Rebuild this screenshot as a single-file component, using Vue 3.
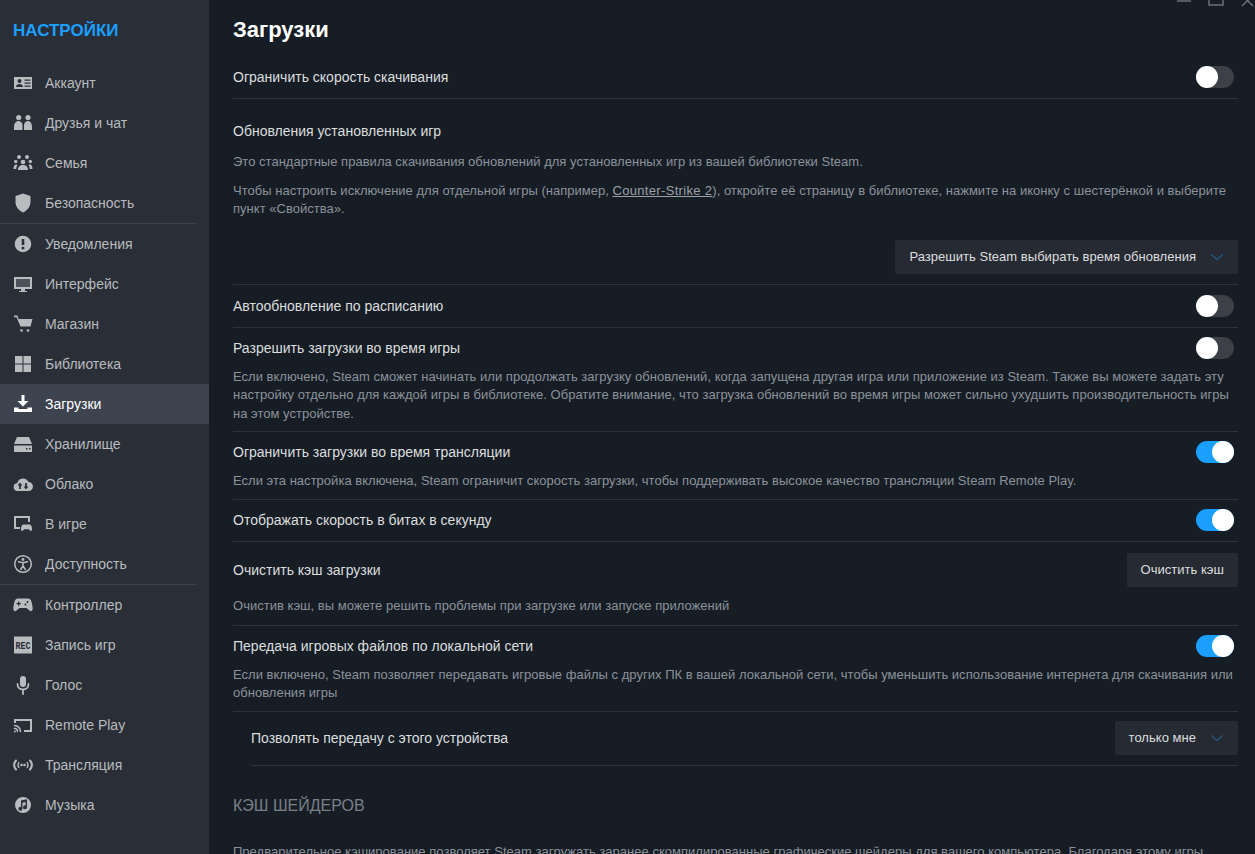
<template>
  <div class="page">
    <aside class="sidebar">
      <div class="brand">НАСТРОЙКИ</div>
      <nav v-for="(group, i) in menu" :key="i" class="menu-group">
        <div
          v-for="item in group"
          :key="item.label"
          class="menu-item"
          :class="{ active: item.label === 'Загрузки' }"
        >
          <svg class="menu-icon" viewBox="0 0 20 20" v-html="item.icon"></svg>
          <span>{{ item.label }}</span>
        </div>
      </nav>
    </aside>

    <main class="content">
      <h1 class="title">Загрузки</h1>

      <div class="row">
        <span class="label">Ограничить скорость скачивания</span>
        <span class="toggle"></span>
      </div>

      <section class="updates">
        <div class="label heading">Обновления установленных игр</div>
        <p class="desc first">Это стандартные правила скачивания обновлений для установленных игр из вашей библиотеки Steam.</p>
        <p class="desc second">
          Чтобы настроить исключение для отдельной игры (например, <a class="link">Counter-Strike 2</a>), откройте её страницу в библиотеке, нажмите на иконку с шестерёнкой и выберите пункт «Свойства».
        </p>
        <div class="right">
          <div class="select">
            Разрешить Steam выбирать время обновления
            <svg class="chevron" viewBox="0 0 12 12"><path d="M.5 3.500L6 8.500l5.500-5" /></svg>
          </div>
        </div>
      </section>

      <div class="row">
        <span class="label">Автообновление по расписанию</span>
        <span class="toggle"></span>
      </div>

      <div class="block">
        <div class="head">
          <span class="label">Разрешить загрузки во время игры</span>
          <span class="toggle"></span>
        </div>
        <p class="desc">Если включено, Steam сможет начинать или продолжать загрузку обновлений, когда запущена другая игра или приложение из Steam. Также вы можете задать эту настройку отдельно для каждой игры в библиотеке. Обратите внимание, что загрузка обновлений во время игры может сильно ухудшить производительность игры на этом устройстве.</p>
      </div>

      <div class="block">
        <div class="head">
          <span class="label">Ограничить загрузки во время трансляции</span>
          <span class="toggle on"></span>
        </div>
        <p class="desc">Если эта настройка включена, Steam ограничит скорость загрузки, чтобы поддерживать высокое качество трансляции Steam Remote Play.</p>
      </div>

      <div class="row short">
        <span class="label">Отображать скорость в битах в секунду</span>
        <span class="toggle on"></span>
      </div>

      <div class="block cache">
        <div class="head">
          <span class="label">Очистить кэш загрузки</span>
          <div class="select">Очистить кэш</div>
        </div>
        <p class="desc">Очистив кэш, вы можете решить проблемы при загрузке или запуске приложений</p>
      </div>

      <div class="block">
        <div class="head">
          <span class="label">Передача игровых файлов по локальной сети</span>
          <span class="toggle on"></span>
        </div>
        <p class="desc">Если включено, Steam позволяет передавать игровые файлы с других ПК в вашей локальной сети, чтобы уменьшить использование интернета для скачивания или обновления игры</p>
      </div>

      <div class="row nested">
        <span class="label">Позволять передачу с этого устройства</span>
        <div class="select">
          только мне
          <svg class="chevron" viewBox="0 0 12 12"><path d="M.5 3.500L6 8.500l5.500-5" /></svg>
        </div>
      </div>

      <h2 class="section-title">КЭШ ШЕЙДЕРОВ</h2>
      <p class="desc">Предварительное кэширование позволяет Steam загружать заранее скомпилированные графические шейдеры для вашего компьютера. Благодаря этому игры</p>
    </main>

    <!-- кнопки окна обрезаны верхним краем -->
    <svg class="window-controls" width="78" height="8" viewBox="0 0 78 8">
      <path d="M0 1h14" />
      <path d="M32 -4h14v9H32z" />
      <path d="M65 -5l5.500 5.500L76 -5M65 6l5.500 -5.500L76 6" />
    </svg>
  </div>
</template>

<script setup>
const fill = (d) => `<path fill="currentColor" fill-rule="evenodd" d="${d}"/>`
const stroke = (d, w = 1.8) =>
  `<path fill="none" stroke="currentColor" stroke-width="${w}" stroke-linecap="round" d="${d}"/>`
const dot = (x, y, r) => `<circle fill="currentColor" cx="${x}" cy="${y}" r="${r}"/>`

const menu = [
  [
    {
      label: 'Аккаунт',
      icon: fill(
        'M1 4h18v12H1z M6.500 6a2 2 0 1 0 0 4 2 2 0 0 0 0-4z M3 14c0-2 1.500-3 3.500-3s3.500 1 3.500 3z M11.500 6.500h6v1.200h-6z M11.500 9.500h6v1.200h-6z M11.500 12.500h6v1.200h-6z'
      ),
    },
    {
      label: 'Друзья и чат',
      icon:
        dot(5.700, 4.500, 2.600) +
        dot(15, 4.500, 2.600) +
        fill('M1 17v-3c0-3.500 2-6 4.500-6 1.300 0 2.500.7 3.200 1.800L9.500 11.500V17z M11 17v-5.500l.8-1.700C12.500 8.700 13.700 8 15 8c2.500 0 4 2.500 4 6v3z'),
    },
    {
      label: 'Семья',
      icon:
        dot(6, 4, 2) +
        dot(14, 4, 2) +
        dot(2.700, 8.500, 1.700) +
        dot(17.300, 8.500, 1.700) +
        dot(10, 9, 2.300) +
        fill('M5 17c0-3.500 2-5 5-5s5 1.500 5 5z M.5 16c0-3 1-4.500 2.500-4.500.6 0 1 .1 1.400.4C3.600 13 3.300 14.500 3.300 16z M19.500 16c0-3-1-4.500-2.500-4.500-.6 0-1 .1-1.400.4.800 1.100 1.100 2.600 1.100 4.100z'),
    },
    {
      label: 'Безопасность',
      icon: fill('M10 .5L17.500 3v6c0 5-3.500 8.500-7.500 10.500C6 17.500 2.500 14 2.500 9V3z'),
    },
  ],
  [
    {
      label: 'Уведомления',
      icon: fill(
        'M10 1.700a8.300 8.300 0 1 0 0 16.600 8.300 8.300 0 0 0 0-16.600z M8.700 5h2.600v6H8.700z M10 12.500a1.500 1.500 0 1 0 0 3 1.500 1.500 0 0 0 0-3z'
      ),
    },
    {
      label: 'Интерфейс',
      icon:
        fill('M1 3h18v12h-7v2h2v1H6v-1h2v-2H1z M3 5v8h14V5z') +
        '<rect x="3" y="5" width="14" height="8" fill="currentColor" opacity=".25"/>',
    },
    {
      label: 'Магазин',
      icon:
        fill('M1 1.500h3.500l1 3.500H19.500l-2 7.500H7.500L3.500 3.300H1z') + dot(8.500, 16.500, 1.300) + dot(15, 16.500, 1.300),
    },
    {
      label: 'Библиотека',
      icon: fill('M2 2h7.500v7.500H2z M10.500 2H18v7.500h-7.500z M2 10.500h7.500V18H2z M10.500 10.500H18V18h-7.500z'),
    },
    {
      label: 'Загрузки',
      icon: fill('M8.500 1h3v6h4L10 12.500 4.500 7h4z M1 13.500h4.500v1.500h9v-1.500H19V18H1z'),
    },
    {
      label: 'Хранилище',
      icon: fill('M4 3h12l3 7H1z M1 11.500h18V18H1z M13 14v1.500h1.500V14z M16 14v1.500h1.500V14z'),
    },
    {
      label: 'Облако',
      icon: fill(
        'M5 17a4 4 0 0 1-.6-8 5.800 5.800 0 0 1 11-1 4.500 4.500 0 0 1 .1 9z M7 8.500l-2.500 3h1.600V15h1.800v-3.500h1.600z M12.100 9v3.500h-1.600l2.500 3 2.500-3h-1.600V9z'
      ),
    },
    {
      label: 'В игре',
      icon: fill(
        'M1 2h16v6h-2V4H3v9h4v2H1z M10.500 10.500h6c1.500 0 2.500 2 2.500 4.500 0 2-1.200 2.500-2.300 1.200l-.9-1h-4.600l-.9 1C9.200 17.500 8 17 8 15c0-2.500 1-4.500 2.500-4.500z'
      ),
    },
    {
      label: 'Доступность',
      icon:
        '<circle cx="10" cy="10" r="8.300" fill="none" stroke="currentColor" stroke-width="1.500"/>' +
        dot(10, 5.500, 1.400) +
        stroke('M5.500 7.800l4.500 1 4.500-1M10 8.800v3M10 11.800l-2.300 3.700M10 11.800l2.300 3.700', 1.500),
    },
  ],
  [
    {
      label: 'Контроллер',
      icon: fill(
        'M5 3.500h10c2 0 3 1 3.700 4 .7 3 1.300 6 .8 7.500-.5 1.500-2.200 1.500-3.300.2L13.500 13h-7l-2.700 2.200c-1.100 1.300-2.800 1.300-3.300-.2-.5-1.500.1-4.500.8-7.500.7-3 1.700-4 3.700-4z M5 6.500v1.500H3.500v1.300H5v1.500h1.300V9.300h1.500V8H6.300V6.500z M14.500 6a1 1 0 1 0 0 2 1 1 0 0 0 0-2z M12.500 8.500a1 1 0 1 0 0 2 1 1 0 0 0 0-2z'
      ),
    },
    {
      label: 'Запись игр',
      icon:
        '<rect x="1" y="1.500" width="18" height="17" fill="currentColor"/>' +
        '<text x="10" y="13.500" text-anchor="middle" textLength="15" lengthAdjust="spacingAndGlyphs" font-family="Liberation Mono, monospace" font-weight="700" font-size="10" fill="#2a2e37">REC</text>',
    },
    {
      label: 'Голос',
      icon:
        '<rect x="7" y="1" width="6" height="11" rx="3" fill="currentColor"/>' +
        stroke('M4.500 9c0 3.500 2.500 5.500 5.500 5.500s5.500-2 5.500-5.500M10 14.500V19'),
    },
    {
      label: 'Remote Play',
      icon:
        fill('M1 4h18v13h-8v-2h6V6H3v2H1z') +
        stroke('M1.500 10.500a6 6 0 0 1 6 6M1.500 13.500a3 3 0 0 1 3 3', 1.500) +
        dot(1.800, 16.500, 1),
    },
    {
      label: 'Трансляция',
      icon:
        stroke('M3 5.500c-2.500 3-2.500 6 0 9M17 5.500c2.500 3 2.500 6 0 9', 2) +
        stroke('M5.800 7.500c-1 1.700-1 3.300 0 5M14.200 7.500c1 1.700 1 3.300 0 5', 1.400) +
        dot(8.500, 10, 1.300) +
        dot(11.500, 10, 1.300),
    },
    {
      label: 'Музыка',
      icon: fill(
        'M10 2a8 8 0 1 0 0 16 8 8 0 0 0 0-16z M8 5.500l6-1.200v8a2 2 0 1 1-1.400-1.900V7l-3.200.7v6a2 2 0 1 1-1.400-1.900z'
      ),
    },
  ],
]
</script>

<style scoped>
.page {
  display: flex;
  position: relative;
  width: 1255px;
  height: 854px;
  overflow: hidden;
  background: #171d25;
  font-family: "Liberation Sans", Arial, sans-serif;
}

.sidebar {
  flex: none;
  width: 209px;
  background: #2a2e37;
}

.brand {
  height: 63px;
  padding: 21px 0 0 13px;
  box-sizing: border-box;
  font-size: 17px;
  line-height: 20px;
  font-weight: 700;
  color: #1a9fff;
}

.menu-group + .menu-group {
  position: relative;
  margin-top: 1px;
}

.menu-group + .menu-group::before {
  content: "";
  position: absolute;
  top: -1px;
  left: 0;
  width: 197px;
  height: 1px;
  background: #3d4149;
}

.menu-item {
  display: flex;
  align-items: center;
  gap: 12px;
  height: 40px;
  padding-left: 13px;
  font-size: 14px;
  color: #b8bcbf;
}

.menu-item.active {
  background: #3d4450;
  color: #fff;
}

.menu-icon {
  flex: none;
  width: 20px;
  height: 20px;
}

.content {
  flex: 1;
  min-width: 0;
  padding: 0 17px 0 24px;
}

.title {
  margin: 0;
  height: 56px;
  padding-top: 18px;
  box-sizing: border-box;
  font-size: 22px;
  line-height: 24px;
  font-weight: 700;
  color: #fff;
}

.row,
.head {
  display: flex;
  align-items: center;
  justify-content: space-between;
}

.row {
  min-height: 42px;
  border-bottom: 1px solid #2d333b;
}

.row.short {
  min-height: 41px;
}

.row.nested {
  min-height: 0;
  margin-left: 18px;
  padding: 9px 0 10px;
}

.head {
  min-height: 40px;
}

.block {
  padding-bottom: 8px;
  border-bottom: 1px solid #2d333b;
}

.block.cache {
  padding-bottom: 9.500px;
}

.block.cache .head {
  min-height: 34px;
  padding-top: 11px;
}

.block.cache .desc {
  margin-top: 10px;
}

.label {
  font-size: 14px;
  line-height: 20px;
  color: #dcdedf;
}

.heading {
  padding-top: 22px;
}

.desc {
  margin: 0;
  font-size: 13px;
  line-height: 18.500px;
  letter-spacing: 0.020px;
  color: #8b929a;
}

.desc.first {
  margin-top: 12px;
}

.desc.second {
  margin-top: 10px;
}

.link {
  letter-spacing: 0.320px;
  color: #9aa0a7;
  text-decoration: underline;
}

.updates {
  padding-bottom: 10px;
  border-bottom: 1px solid #2d333b;
}

.right {
  display: flex;
  justify-content: flex-end;
  margin-top: 21px;
}

.select {
  display: flex;
  align-items: center;
  height: 34px;
  padding: 0 14px;
  border-radius: 2px;
  background: #262a33;
  font-size: 13px;
  letter-spacing: 0.030px;
  color: #dcdedf;
}

.chevron {
  width: 12px;
  height: 12px;
  margin: 0 1px 0 15px;
  fill: none;
  stroke: #1a9fff;
  stroke-width: 1;
  opacity: 0.65;
}

.toggle {
  flex: none;
  position: relative;
  width: 38px;
  height: 22px;
  margin-right: 4px;
  border-radius: 11px;
  background: #3d4046;
}

.toggle::after {
  content: "";
  position: absolute;
  top: 0;
  left: 0;
  width: 22px;
  height: 22px;
  border-radius: 50%;
  background: #fff;
}

.toggle.on {
  background: #1a9fff;
}

.toggle.on::after {
  left: 16px;
}

.section-title {
  margin: 30px 0 27px;
  font-size: 16px;
  line-height: 20px;
  font-weight: 400;
  color: #7a8088;
}

.window-controls {
  position: absolute;
  top: 0;
  left: 1177px;
  fill: none;
  stroke: #6a6f76;
  stroke-width: 1.500;
}
</style>
